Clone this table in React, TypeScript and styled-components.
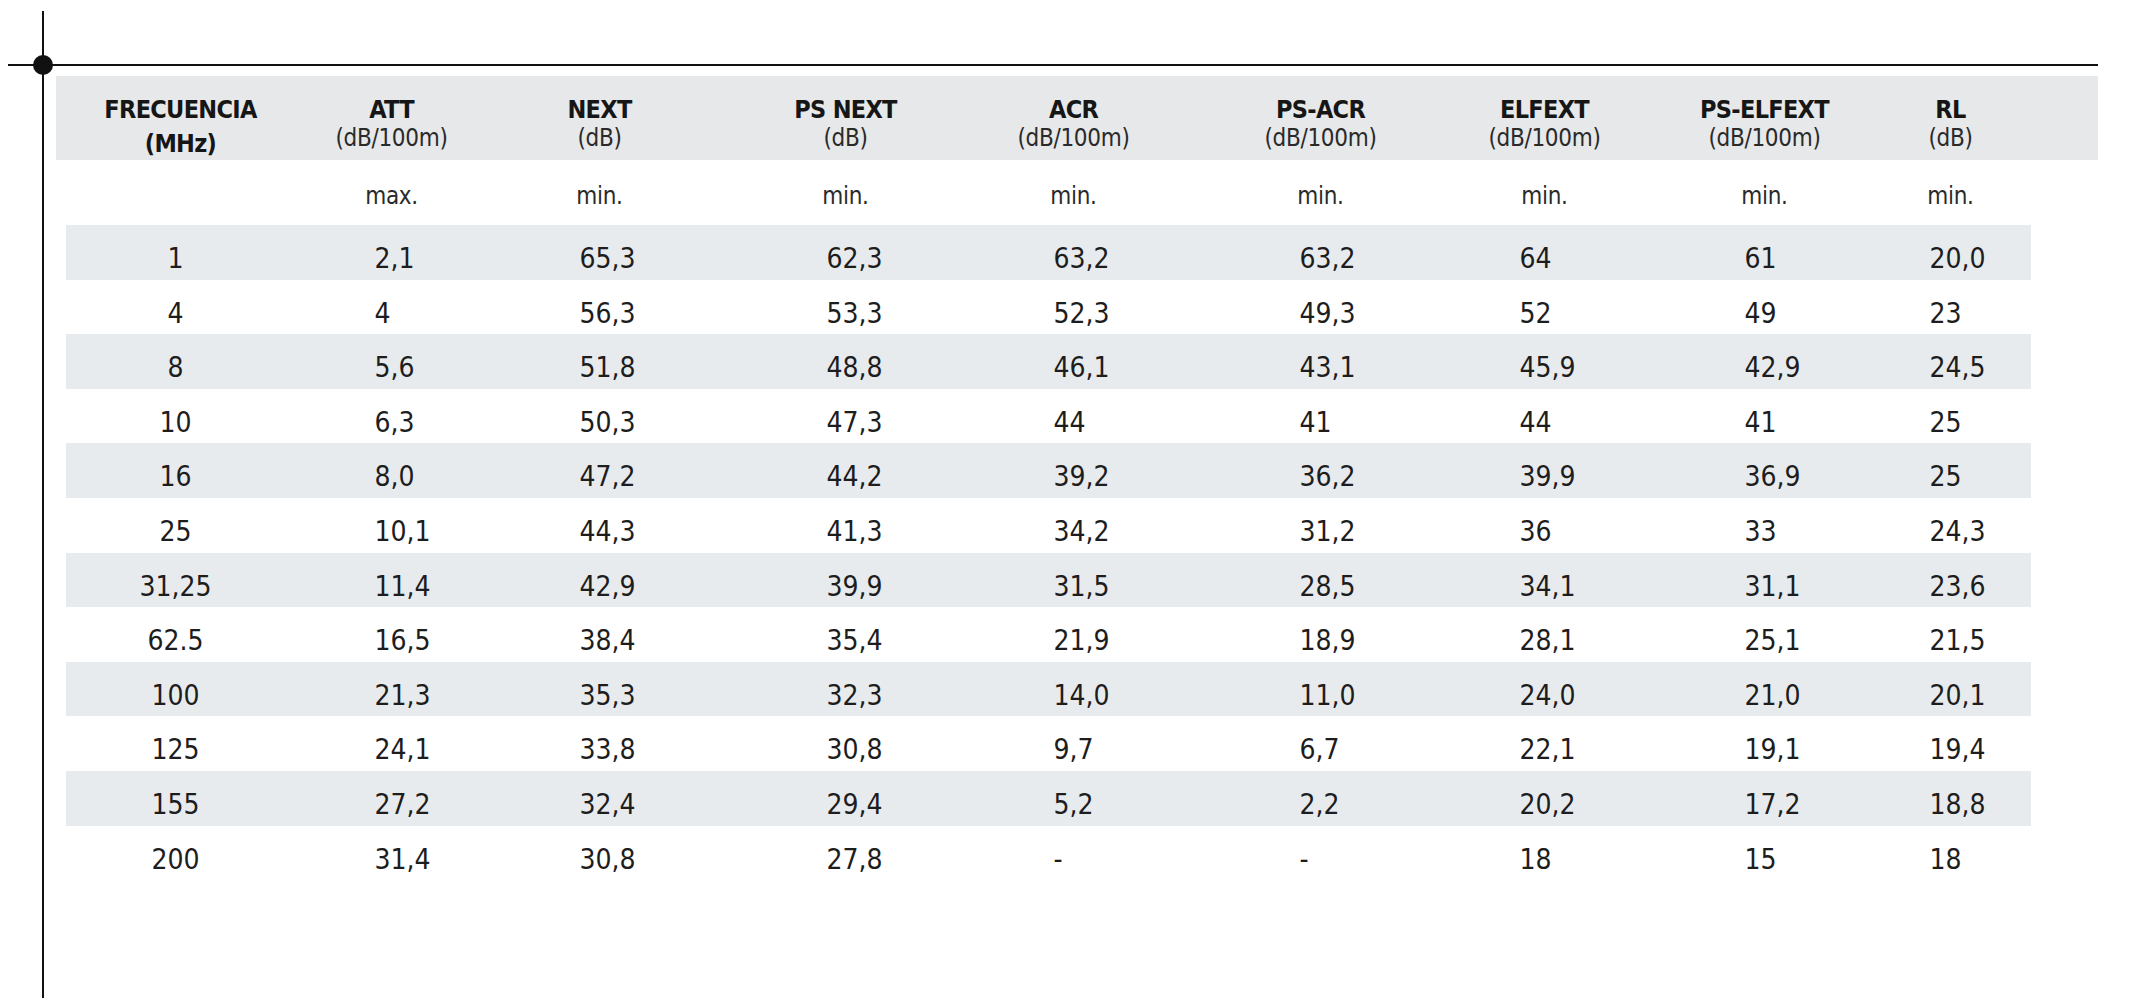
import styled, { createGlobalStyle } from "styled-components";

const GlobalStyle = createGlobalStyle`
  html, body {
    margin: 0;
    padding: 0;
    background: #ffffff;
  }
  body {
    font-family: "DejaVu Sans Condensed", "DejaVu Sans", "Liberation Sans", sans-serif;
    font-stretch: condensed;
    color: #1d1d1d;
  }
`;

// column widths of the header grid (x = 56 .. 1998), each centred on its title
const COLS = [250, 172, 244, 248, 208, 286, 162, 278, 94];

const columns = [
  { title: "FRECUENCIA", unit: "(MHz)", limit: "", inset: 0 },
  { title: "ATT", unit: "(dB/100m)", limit: "max.", inset: 69 },
  { title: "NEXT", unit: "(dB)", limit: "min.", inset: 102 },
  { title: "PS NEXT", unit: "(dB)", limit: "min.", inset: 105 },
  { title: "ACR", unit: "(dB/100m)", limit: "min.", inset: 84 },
  { title: "PS-ACR", unit: "(dB/100m)", limit: "min.", inset: 122 },
  { title: "ELFEXT", unit: "(dB/100m)", limit: "min.", inset: 56 },
  { title: "PS-ELFEXT", unit: "(dB/100m)", limit: "min.", inset: 119 },
  { title: "RL", unit: "(dB)", limit: "min.", inset: 26 },
];

const rows = [
  ["1", "2,1", "65,3", "62,3", "63,2", "63,2", "64", "61", "20,0"],
  ["4", "4", "56,3", "53,3", "52,3", "49,3", "52", "49", "23"],
  ["8", "5,6", "51,8", "48,8", "46,1", "43,1", "45,9", "42,9", "24,5"],
  ["10", "6,3", "50,3", "47,3", "44", "41", "44", "41", "25"],
  ["16", "8,0", "47,2", "44,2", "39,2", "36,2", "39,9", "36,9", "25"],
  ["25", "10,1", "44,3", "41,3", "34,2", "31,2", "36", "33", "24,3"],
  ["31,25", "11,4", "42,9", "39,9", "31,5", "28,5", "34,1", "31,1", "23,6"],
  ["62.5", "16,5", "38,4", "35,4", "21,9", "18,9", "28,1", "25,1", "21,5"],
  ["100", "21,3", "35,3", "32,3", "14,0", "11,0", "24,0", "21,0", "20,1"],
  ["125", "24,1", "33,8", "30,8", "9,7", "6,7", "22,1", "19,1", "19,4"],
  ["155", "27,2", "32,4", "29,4", "5,2", "2,2", "20,2", "17,2", "18,8"],
  ["200", "31,4", "30,8", "27,8", "-", "-", "18", "15", "18"],
];

const headTemplate = COLS.map((w) => `${w}px`).join(" ") + " 1fr";
const dataTemplate =
  [COLS[0] - 10, ...COLS.slice(1)].map((w) => `${w}px`).join(" ") + " 1fr";

const Page = styled.div`
  height: 1006px;
  padding-top: 11px;
  box-sizing: border-box;
  overflow: hidden;
`;

const Frame = styled.div`
  margin-left: 42px;
  height: 987px;
  border-left: 2.5px solid #111;
  display: flex;
  flex-direction: column;
`;

const Stem = styled.div`
  height: 53px;
  flex: none;
`;

const Rule = styled.div`
  position: relative;
  flex: none;
  height: 2px;
  width: 2090px;
  margin-left: -36.5px;
  background: #111;
`;

const Dot = styled.span`
  position: absolute;
  left: 25px;
  top: -9px;
  width: 20px;
  height: 20px;
  border-radius: 50%;
  background: #111;
`;

const Table = styled.div`
  margin: 10px 0 0 11.5px;
  width: 2042px;
  display: flex;
  flex-direction: column;
`;

const HeadRow = styled.div`
  display: grid;
  grid-template-columns: ${headTemplate};
  height: 84px;
  box-sizing: border-box;
  padding-top: 20px;
  background: #e6e8e9;
`;

const HeadCell = styled.div<{ $tall?: boolean }>`
  text-align: center;
  margin-top: ${(p) => (p.$tall ? "-3px" : "0")};
  line-height: ${(p) => (p.$tall ? "34px" : "28px")};
`;

const Title = styled.div`
  font-weight: 700;
  font-size: 25px;
  letter-spacing: -0.7px;
  color: #161616;
`;

const Unit = styled.div<{ $bold?: boolean }>`
  font-size: ${(p) => (p.$bold ? "25px" : "24px")};
  font-weight: ${(p) => (p.$bold ? 700 : 400)};
  letter-spacing: ${(p) => (p.$bold ? "-0.7px" : "-0.3px")};
  color: ${(p) => (p.$bold ? "#161616" : "#2a2a2a")};
`;

const SubRow = styled.div`
  display: grid;
  grid-template-columns: ${headTemplate};
  height: 65px;
  box-sizing: border-box;
  padding-top: 7px;
`;

const SubCell = styled.div`
  text-align: center;
  font-size: 24px;
  line-height: 58px;
  letter-spacing: -0.3px;
  color: #2a2a2a;
`;

const DataRow = styled.div<{ $shade: boolean }>`
  display: grid;
  grid-template-columns: ${dataTemplate};
  height: 54.6px;
  box-sizing: border-box;
  padding-top: 14px;
  margin-left: 10px;
  width: 1965px;
  background: ${(p) => (p.$shade ? "#e8ebee" : "transparent")};
`;

const DataCell = styled.div<{ $inset: number; $center?: boolean }>`
  font-size: 28px;
  line-height: 40px;
  white-space: nowrap;
  text-align: ${(p) => (p.$center ? "center" : "left")};
  padding-left: ${(p) => p.$inset}px;
  padding-right: ${(p) => (p.$center ? 20 : 0)}px;
`;

export default function App() {
  return (
    <Page>
      <GlobalStyle />
      <Frame>
        <Stem />
        <Rule>
          <Dot />
        </Rule>
        <Table>
          <HeadRow>
            {columns.map((c, i) => (
              <HeadCell key={c.title} $tall={i === 0}>
                <Title>{c.title}</Title>
                <Unit $bold={i === 0}>{c.unit}</Unit>
              </HeadCell>
            ))}
          </HeadRow>
          <SubRow>
            {columns.map((c) => (
              <SubCell key={c.title}>{c.limit}</SubCell>
            ))}
          </SubRow>
          {rows.map((r, ri) => (
            <DataRow key={r[0]} $shade={ri % 2 === 0}>
              {r.map((v, ci) => (
                <DataCell key={ci} $inset={columns[ci].inset} $center={ci === 0}>
                  {v}
                </DataCell>
              ))}
            </DataRow>
          ))}
        </Table>
      </Frame>
    </Page>
  );
}
